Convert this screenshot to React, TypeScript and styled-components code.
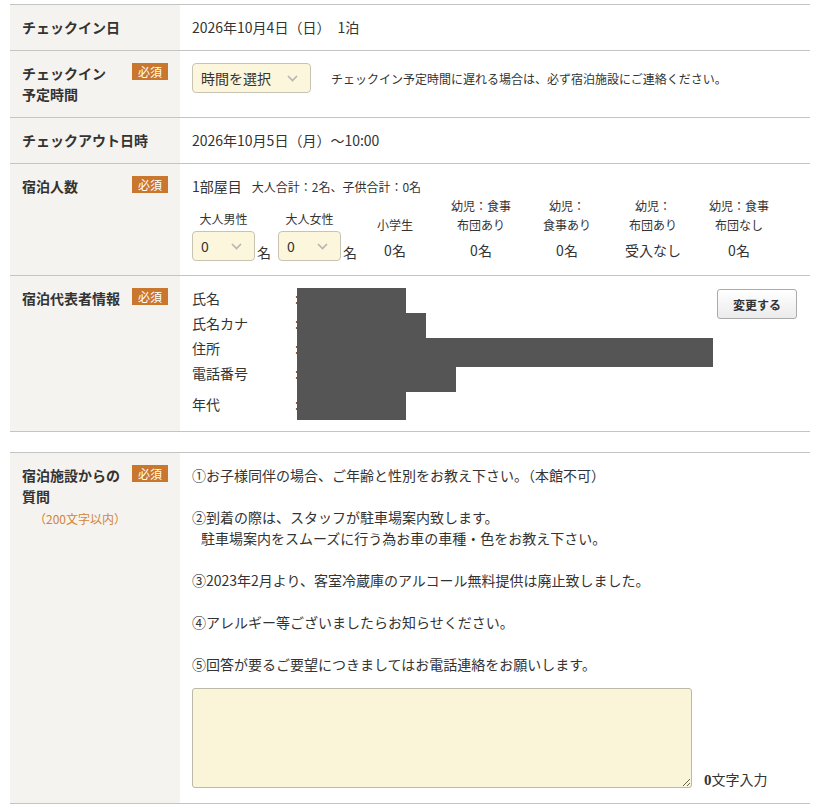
import { createGlobalStyle } from "styled-components";
import styled from "styled-components";
import { Fragment } from "react";

const GlobalStyle = createGlobalStyle`
  body {
    margin: 0;
    background: #fff;
    font-family: "Noto Sans CJK JP", "Noto Sans", sans-serif;
    color: #333;
    font-size: 14px;
  }
`;

const Page = styled.div`
  padding: 4px 9px 0 10px;
`;

const Table = styled.div<{ $gap?: number }>`
  border-top: 1px solid #c4c4c4;
  margin-top: ${(p) => p.$gap ?? 0}px;
`;

const Row = styled.div`
  display: grid;
  grid-template-columns: 170px 1fr;
  border-bottom: 1px solid #c4c4c4;
`;

const Label = styled.div`
  background: #f5f3ef;
  padding: 12px;
  display: flex;
  justify-content: space-between;
  align-items: flex-start;
`;

const LabelText = styled.div`
  font-weight: 700;
  line-height: 21px;
  font-size: 14px;
  color: #333;
`;

const Hint = styled.div`
  font-weight: 400;
  font-size: 12px;
  color: #d08536;
  padding-left: 12px;
  line-height: 24px;
`;

const Badge = styled.span`
  background: #c9772c;
  color: #fff;
  font-size: 12px;
  line-height: 17px;
  height: 17px;
  padding: 0 6px;
  white-space: nowrap;
`;

const Cell = styled.div<{ $pad?: string }>`
  padding: ${(p) => p.$pad ?? "12px"};
  line-height: 21px;
`;

const InlineRow = styled.div`
  display: flex;
  align-items: center;
  gap: 20px;
`;

const SelectBox = styled.div<{ $w: number }>`
  width: ${(p) => p.$w}px;
  height: 30px;
  box-sizing: border-box;
  background: #fbf6dc;
  border: 1px solid #c8c4b4;
  border-radius: 4px;
  display: flex;
  align-items: center;
  justify-content: space-between;
  padding: 0 12px 0 8px;
  font-size: 14px;
  line-height: 1;
`;

const Note = styled.span`
  font-size: 12px;
`;

const Chevron = () => (
  <svg width="11" height="7" viewBox="0 0 11 7">
    <path d="M1 1l4.5 4.5L10 1" fill="none" stroke="#b4b4b4" strokeWidth="1.6" />
  </svg>
);

const Summary = styled.div`
  line-height: 18px;
  font-size: 14px;
  span {
    font-size: 12px;
    margin-left: 10px;
  }
`;

const Counts = styled.div`
  display: grid;
  grid-template-columns: 86px 74px repeat(5, 86px);
  align-items: end;
`;

const CountCol = styled.div<{ $center?: boolean }>`
  display: flex;
  flex-direction: column;
  align-items: ${(p) => (p.$center ? "center" : "flex-start")};
  text-align: center;
`;

const CountHead = styled.div<{ $adult?: boolean }>`
  font-size: 12px;
  line-height: 19px;
  margin-bottom: ${(p) => (p.$adult ? 3 : 6)}px;
  width: ${(p) => (p.$adult ? "63px" : "auto")};
`;

const CountValue = styled.div`
  font-size: 14px;
  line-height: 21px;
`;

const SelectWrap = styled.div`
  display: flex;
  align-items: flex-end;
  gap: 2px;
  font-size: 14px;
  line-height: 18px;
`;

const InfoWrap = styled.div`
  display: flex;
  justify-content: space-between;
  align-items: flex-start;
  padding: 12px 13px 11px 12px;
`;

const InfoGrid = styled.div`
  position: relative;
  display: grid;
  grid-template-columns: 103px auto;
`;

const InfoCell = styled.div<{ $h: number }>`
  height: ${(p) => p.$h}px;
  line-height: ${(p) => (p.$h > 25 ? p.$h : 20)}px;
  font-size: 14px;
`;

const Redact = styled.div`
  position: absolute;
  background: #555;
`;

const ChangeBtn = styled.button`
  width: 80px;
  height: 30px;
  margin-top: 1px;
  border: 1px solid #aaa;
  border-radius: 3px;
  background: linear-gradient(#fff, #ebebeb);
  font-family: inherit;
  font-weight: 700;
  font-size: 12px;
  color: #333;
  padding: 0;
`;

const Questions = styled.div`
  line-height: 21px;
  font-size: 14px;
`;

const Indent = styled.div`
  padding-left: 9px;
`;

const Blank = styled.div`
  height: 21px;
`;

const AnswerRow = styled.div`
  display: flex;
  align-items: flex-end;
  gap: 12px;
  margin-top: 13px;
`;

const TextArea = styled.textarea`
  width: 500px;
  height: 100px;
  box-sizing: border-box;
  background: #faf5d9;
  border: 1px solid #bdb9a8;
  border-radius: 3px;
  resize: both;
  display: block;
`;

const Counter = styled.div`
  font-size: 14px;
  line-height: 14px;
  padding-bottom: 1px;
  b {
    font-family: "Liberation Serif", serif;
    font-size: 15px;
  }
`;

const infos = [
  { label: "氏名", h: 25 },
  { label: "氏名カナ", h: 25 },
  { label: "住所", h: 25 },
  { label: "電話番号", h: 25 },
  { label: "年代", h: 32 },
];

// blacked-out personal data, drawn over the values
const redactions = [
  { left: 105, top: 0, width: 109, height: 132 },
  { left: 214, top: 25, width: 20, height: 25 },
  { left: 214, top: 50, width: 307, height: 29 },
  { left: 214, top: 79, width: 50, height: 25 },
];

const kids = [
  { head: ["小学生"], value: "0名" },
  { head: ["幼児：食事", "布団あり"], value: "0名" },
  { head: ["幼児：", "食事あり"], value: "0名" },
  { head: ["幼児：", "布団あり"], value: "受入なし" },
  { head: ["幼児：食事", "布団なし"], value: "0名" },
];

export default function App() {
  return (
    <Page>
      <GlobalStyle />
      <Table>
        <Row>
          <Label>
            <LabelText>チェックイン日</LabelText>
          </Label>
          <Cell>2026年10月4日（日）　1泊</Cell>
        </Row>
        <Row>
          <Label>
            <LabelText>
              チェックイン
              <br />
              予定時間
            </LabelText>
            <Badge>必須</Badge>
          </Label>
          <Cell>
            <InlineRow>
              <SelectBox $w={119}>
                時間を選択
                <Chevron />
              </SelectBox>
              <Note>チェックイン予定時間に遅れる場合は、必ず宿泊施設にご連絡ください。</Note>
            </InlineRow>
          </Cell>
        </Row>
        <Row>
          <Label>
            <LabelText>チェックアウト日時</LabelText>
          </Label>
          <Cell>2026年10月5日（月）～10:00</Cell>
        </Row>
        <Row>
          <Label>
            <LabelText>宿泊人数</LabelText>
            <Badge>必須</Badge>
          </Label>
          <Cell $pad="13px 12px 14px">
            <Summary>
              1部屋目<span>大人合計：2名、子供合計：0名</span>
            </Summary>
            <Counts>
              {["大人男性", "大人女性"].map((h) => (
                <CountCol key={h}>
                  <CountHead $adult>{h}</CountHead>
                  <SelectWrap>
                    <SelectBox $w={63}>
                      0
                      <Chevron />
                    </SelectBox>
                    名
                  </SelectWrap>
                </CountCol>
              ))}
              {kids.map((k, i) => (
                <CountCol key={i} $center>
                  <CountHead>
                    {k.head.map((l) => (
                      <div key={l}>{l}</div>
                    ))}
                  </CountHead>
                  <CountValue>{k.value}</CountValue>
                </CountCol>
              ))}
            </Counts>
          </Cell>
        </Row>
        <Row>
          <Label>
            <LabelText>宿泊代表者情報</LabelText>
            <Badge>必須</Badge>
          </Label>
          <InfoWrap>
            <InfoGrid>
              {infos.map((r) => (
                <Fragment key={r.label}>
                  <InfoCell $h={r.h}>{r.label}</InfoCell>
                  <InfoCell $h={r.h}>:</InfoCell>
                </Fragment>
              ))}
              {redactions.map((r, i) => (
                <Redact key={i} style={r} />
              ))}
            </InfoGrid>
            <ChangeBtn>変更する</ChangeBtn>
          </InfoWrap>
        </Row>
      </Table>

      <Table $gap={20}>
        <Row>
          <Label>
            <div>
              <LabelText>
                宿泊施設からの
                <br />
                質問
              </LabelText>
              <Hint>（200文字以内）</Hint>
            </div>
            <Badge>必須</Badge>
          </Label>
          <Cell $pad="12px 12px 15px">
            <Questions>
              <div>①お子様同伴の場合、ご年齢と性別をお教え下さい。（本館不可）</div>
              <Blank />
              <div>②到着の際は、スタッフが駐車場案内致します。</div>
              <Indent>駐車場案内をスムーズに行う為お車の車種・色をお教え下さい。</Indent>
              <Blank />
              <div>③2023年2月より、客室冷蔵庫のアルコール無料提供は廃止致しました。</div>
              <Blank />
              <div>④アレルギー等ございましたらお知らせください。</div>
              <Blank />
              <div>⑤回答が要るご要望につきましてはお電話連絡をお願いします。</div>
            </Questions>
            <AnswerRow>
              <TextArea />
              <Counter>
                <b>0</b>文字入力
              </Counter>
            </AnswerRow>
          </Cell>
        </Row>
      </Table>
    </Page>
  );
}
